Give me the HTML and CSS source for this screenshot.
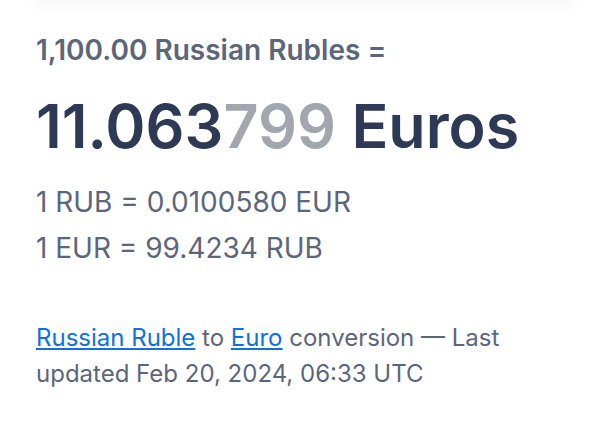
FILE: index.html
```html
<!DOCTYPE html>
<html lang="en">
<head>
    <meta charset="UTF-8">
    <meta name="viewport" content="width=device-width, initial-scale=1.0">
    <title>RUB to EUR</title>
    <link rel="stylesheet" href="styles.css">
</head>
<body>
    <div class="topbar"></div>
    <div class="result">
        <p class="from-amount">1,100.00 Russian Rubles =</p>
        <p class="to-amount">11.063<span class="faded">799</span> Euros</p>
        <div class="rates">
            <p>1 RUB = 0.0100580 EUR</p>
            <p>1 EUR = 99.4234 RUB</p>
        </div>
        <p class="note">
            <a href="#">Russian Ruble</a> to <a href="#">Euro</a> conversion — Last updated Feb 20, 2024, 06:33 UTC
        </p>
    </div>
</body>
</html>
```

FILE: styles.css
```css
body {
    font-family: Inter, "Noto Sans", sans-serif;
    margin: 0;
    padding: 0;
    background-color: #ffffff;
    color: #5c667b;
    overflow: hidden;
}

/* shadow of the converter card sitting above */
.topbar {
    height: 12px;
    margin: -12px 30px 0;
    background: #ffffff;
    border-radius: 0 0 24px 24px;
    box-shadow: 0 4px 16px rgba(0, 0, 0, 0.05);
}

.result {
    padding: 29px 36px 0;
}

.result p {
    margin: 0;
}

.from-amount {
    font-size: 28px;
    font-weight: 600;
    line-height: 42px;
}

.to-amount {
    font-size: 61px;
    font-weight: 600;
    line-height: 72px;
    color: #2e3a55;
    margin-top: 19px !important;
}

.faded {
    color: #a2a6af;
}

.rates {
    margin-top: 17px;
}

.rates p {
    font-size: 28px;
    line-height: 46px;
}

.note {
    font-size: 24px;
    line-height: 36px;
    margin-top: 49px !important;
}

.note a {
    color: #1070e0;
}
```
